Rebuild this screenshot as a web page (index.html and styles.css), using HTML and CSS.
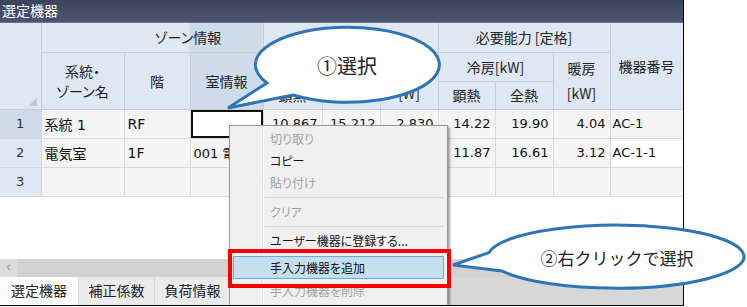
FILE: index.html
```html
<!DOCTYPE html>
<html lang="ja">
<head>
  <meta charset="UTF-8">
  <title>選定機器</title>
  <link rel="stylesheet" href="styles.css">
</head>
<body>
  <div class="app">
    <div class="titlebar">選定機器</div>

    <div class="grid-area">
      <table class="grid">
        <colgroup>
          <col style="width:41px">
          <col style="width:83px">
          <col style="width:66px">
          <col style="width:73px">
          <col style="width:59px">
          <col style="width:58px">
          <col style="width:58px">
          <col style="width:57px">
          <col style="width:58px">
          <col style="width:57px">
          <col style="width:73px">
        </colgroup>
        <thead>
          <tr class="h1">
            <th class="corner" rowspan="3"></th>
            <th class="zone" colspan="3">ゾーン情報</th>
            <th colspan="3"></th>
            <th colspan="3">必要能力 [定格]</th>
            <th rowspan="3">機器番号</th>
          </tr>
          <tr class="h2">
            <th rowspan="2">系統・<br>ゾーン名</th>
            <th rowspan="2">階</th>
            <th class="sel" rowspan="2">室情報</th>
            <th colspan="2"></th>
            <th class="tall" rowspan="2"><br>[W]</th>
            <th colspan="2">冷房[kW]</th>
            <th class="tall" rowspan="2">暖房<br>[kW]</th>
          </tr>
          <tr class="h3">
            <th>顕熱</th>
            <th>全熱</th>
            <th>顕熱</th>
            <th>全熱</th>
          </tr>
        </thead>
        <tbody>
          <tr>
            <th class="rowhead sel">1</th>
            <td>系統 1</td>
            <td>RF</td>
            <td class="selected"></td>
            <td class="num">10.867</td>
            <td class="num">15.212</td>
            <td class="num">2.830</td>
            <td class="num">14.22</td>
            <td class="num">19.90</td>
            <td class="num">4.04</td>
            <td class="code">AC-1</td>
          </tr>
          <tr>
            <th class="rowhead">2</th>
            <td>電気室</td>
            <td>1F</td>
            <td>001 電気室</td>
            <td></td>
            <td></td>
            <td></td>
            <td class="num">11.87</td>
            <td class="num">16.61</td>
            <td class="num">3.12</td>
            <td class="code edit">AC-1-1</td>
          </tr>
          <tr>
            <th class="rowhead">3</th>
            <td></td><td></td><td></td><td></td><td></td>
            <td></td><td></td><td></td><td></td><td></td>
          </tr>
        </tbody>
      </table>
    </div>

    <div class="hscroll">
      <span class="scroll-btn">&lsaquo;</span>
      <span class="scroll-thumb"></span>
    </div>

    <div class="tabs">
      <span class="tab active">選定機器</span>
      <span class="tab">補正係数</span>
      <span class="tab">負荷情報</span>
    </div>

    <div class="ctx-menu">
      <div class="item disabled">切り取り</div>
      <div class="item">コピー</div>
      <div class="item disabled">貼り付け</div>
      <div class="sep"></div>
      <div class="item disabled">クリア</div>
      <div class="sep"></div>
      <div class="item">ユーザー機器に登録する...</div>
      <div class="item active">手入力機器を追加</div>
      <div class="item disabled">手入力機器を削除</div>
    </div>

    <div class="red-box"></div>
  </div>

  <svg class="callouts" width="747" height="307" viewBox="0 0 747 307">
    <path class="bubble" d="M267 83 L228 108 L293 95 A92 37.5 0 1 0 267 83 Z"/>
    <text class="bubble-text big" x="347" y="74" text-anchor="middle">①選択</text>
    <path class="bubble" d="M489 252.6 L453 265 L502 271 A128 31.5 0 1 0 489 252.6 Z"/>
    <text class="bubble-text" x="617" y="265" text-anchor="middle">②右クリックで選択</text>
  </svg>
</body>
</html>
```

FILE: styles.css
```css
html, body {
  margin: 0;
  padding: 0;
}
body {
  width: 747px;
  height: 307px;
  overflow: hidden;
  position: relative;
  background: #fff;
  font-family: "Noto Sans CJK JP", sans-serif;
  color: #111;
}
.app {
  position: relative;
  width: 683px;
  height: 305px;
  border-right: 1px solid #000;
  border-bottom: 1px solid #000;
  display: flex;
  flex-direction: column;
  overflow: hidden;
}
.titlebar {
  flex: none;
  height: 23px;
  box-sizing: border-box;
  padding-left: 2px;
  background: linear-gradient(#3c445c, #4b5470);
  border-bottom: 1px solid #6c7489;
  color: #fff;
  font-size: 14px;
  line-height: 20px;
  font-feature-settings: "palt";
}
.grid-area {
  flex: 1;
  background: #fff;
  overflow: hidden;
}
.grid {
  border-collapse: collapse;
  table-layout: fixed;
  width: 683px;
}
.grid th {
  padding: 0;
  background: #dfe7f2;
  border: 1px solid #c6cdd8;
  font-weight: normal;
  font-size: 14px;
  color: #222;
  line-height: 20px;
  font-feature-settings: "palt";
}
.grid .h1 th {
  border-top: none;
}
.grid tr.h1 { height: 29px; }
.grid tr.h2 { height: 29px; }
.grid tr.h3 { height: 28px; }
.grid th:first-child {
  border-left: none;
}
.grid th.tall {
  line-height: 25px;
}
.grid th.sel {
  background-color: #cddbeb;
}
.grid th.zone {
  background: linear-gradient(to right, #dfe7f2 148px, #cddbeb 148px);
  padding-left: 72px;
}
.grid th.corner {
  background: linear-gradient(to bottom right, transparent 50%, #c3cad4 50%) no-repeat right 4px bottom 3px / 9px 9px, #dfe7f2;
}
.grid tbody tr {
  height: 29px;
}
.grid th.rowhead {
  font-family: "DejaVu Sans", sans-serif;
  font-size: 13px;
  color: #333;
  border-color: #d3d9e2;
}
.grid th.rowhead.sel {
  background: #cddbeb;
}
.grid td {
  padding: 0 3px;
  background: #f4f4f4;
  border: 1px solid #dadada;
  font-family: "DejaVu Sans", "Noto Sans CJK JP", sans-serif;
  font-size: 13px;
  white-space: nowrap;
  overflow: hidden;
}
.grid td:nth-child(2),
.grid td:nth-child(3) {
  font-size: 14px;
}
.grid td.num {
  text-align: right;
  padding-right: 4px;
}
.grid td.code {
  padding-left: 2px;
}
.grid td.edit {
  background: #fff;
}
.grid td.selected {
  background: #fff;
  box-shadow: inset 0 0 0 2px #111;
}
.hscroll {
  flex: none;
  height: 18px;
  display: flex;
  background: #d2d2d2;
}
.scroll-btn {
  width: 17px;
  background: #dcdcdc;
  color: #a6a6a6;
  font-family: "DejaVu Sans", sans-serif;
  font-size: 15px;
  line-height: 16px;
  text-align: center;
}
.scroll-thumb {
  width: 20px;
}
.tabs {
  flex: none;
  height: 28px;
  display: flex;
  gap: 1px;
  background: #d7d7d7;
}
.tab {
  width: 75px;
  background: #ebebeb;
  font-size: 14px;
  line-height: 27px;
  text-align: center;
  color: #222;
}
.tab.active {
  width: 78px;
  background: #fcfcfc;
}
.ctx-menu {
  position: absolute;
  left: 229px;
  top: 125px;
  width: 219px;
  height: 190px;
  box-sizing: border-box;
  padding-top: 2px;
  border: 1px solid #979797;
  background: linear-gradient(to right, #f0f0f0 32px, #e2e3e3 32px, #e2e3e3 33px, #fff 33px, #fff 34px, #f0f0f0 34px);
  box-shadow: 2px 2px 2px rgba(0, 0, 0, 0.35);
  font-size: 12px;
  font-feature-settings: "palt";
}
.ctx-menu .item {
  height: 22px;
  line-height: 22px;
  padding-left: 40px;
  color: #111;
}
.ctx-menu .item.disabled {
  color: #a2a2a2;
}
.ctx-menu .item.active {
  height: 21px;
  line-height: 21px;
  margin: 4px 3px 1px 3px;
  padding-left: 36px;
  background: #c4dfee;
  border: 1px solid #6aa8d8;
}
.ctx-menu .sep {
  height: 1px;
  margin: 3px 4px 3px 35px;
  background: #d7d7d7;
}
.red-box {
  position: absolute;
  left: 228px;
  top: 249px;
  width: 223px;
  height: 39px;
  box-sizing: border-box;
  border: 4px solid #ff0000;
}
.callouts {
  position: absolute;
  left: 0;
  top: 0;
  pointer-events: none;
}
.bubble {
  fill: #fff;
  stroke: #2e75b6;
  stroke-width: 3;
  stroke-linejoin: miter;
}
.bubble-text {
  font-family: "Noto Sans CJK JP", sans-serif;
  font-size: 17px;
  fill: #222;
}
.bubble-text.big {
  font-size: 20px;
}
```
